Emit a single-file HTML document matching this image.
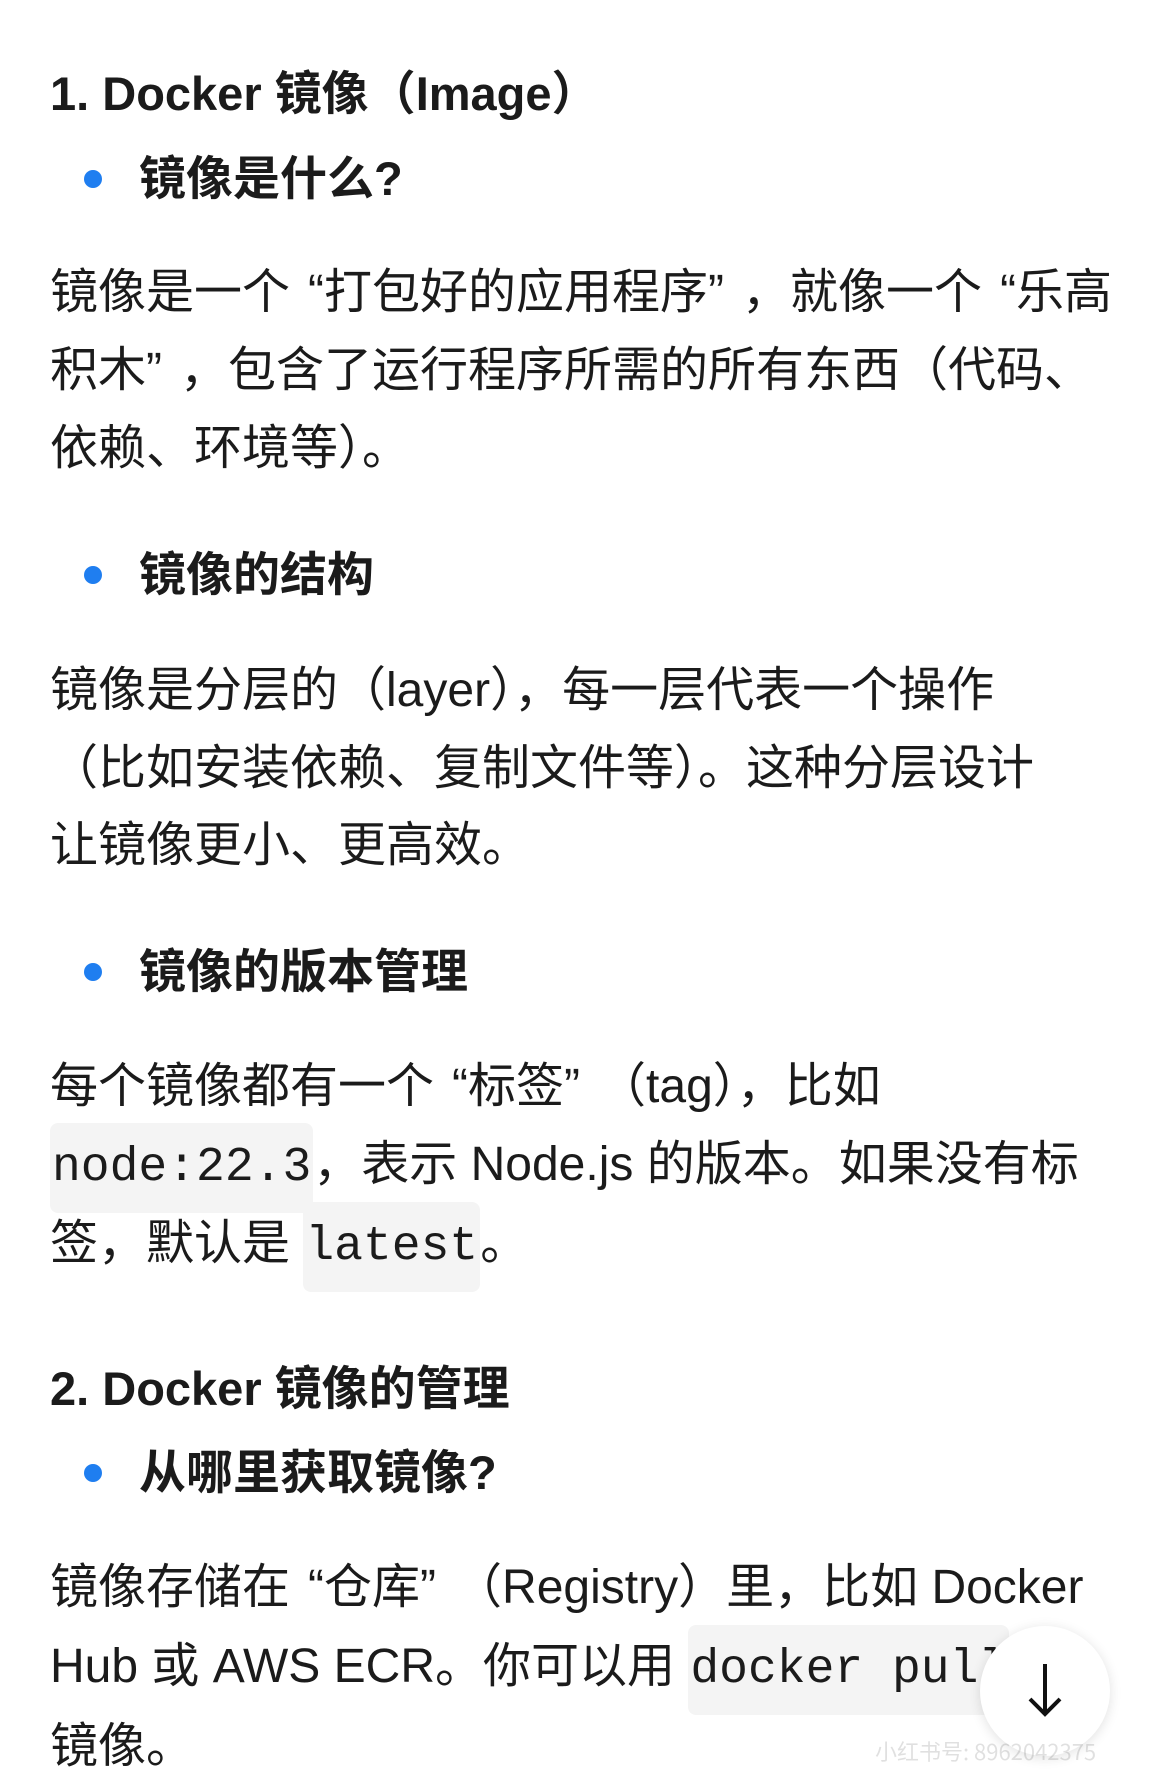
<!DOCTYPE html>
<html><head><meta charset="utf-8"><style>
html,body{margin:0;padding:0;background:#fff;}
body{width:1170px;height:1787px;position:relative;overflow:hidden;font-family:"Noto Sans CJK SC","Liberation Sans",sans-serif;color:#1b1b1b;}
.e{font-family:"Liberation Sans",sans-serif;}
.o,.c{font-family:"Liberation Sans",sans-serif;display:inline-block;width:34px;}
.o{text-align:right;}
.c{text-align:left;}
.l{position:absolute;left:50px;height:78px;line-height:78px;font-size:48px;white-space:nowrap;}
.h{font-weight:bold;font-size:47px;}
.b{left:139px;font-weight:bold;font-size:47px;}
.dot{position:absolute;left:84px;width:18px;height:18px;border-radius:50%;background:#1f7ef0;}
code{font-family:"Liberation Mono",monospace;font-size:48px;background:#f4f4f4;border-radius:8px;padding:18px 2px;}
</style></head><body>
<div class="l h" style="top:51px"><span class="e">1. Docker </span>镜像（<span class="e">Image</span>）</div>
<div class="dot" style="top:170px"></div><div class="l b" style="top:136px">镜像是什么<span class="e">?</span></div>
<div class="l" style="top:248px">镜像是一个<span class="o">“</span>打包好的应用程序<span class="c">”</span>，就像一个<span class="o">“</span>乐高</div>
<div class="l" style="top:326px">积木<span class="c">”</span>，包含了运行程序所需的所有东西（代码、</div>
<div class="l" style="top:404px">依赖、环境等）。</div>
<div class="dot" style="top:566px"></div><div class="l b" style="top:532px">镜像的结构</div>
<div class="l" style="top:646px">镜像是分层的（<span class="e">layer</span>），每一层代表一个操作</div>
<div class="l" style="top:724px">（比如安装依赖、复制文件等）。这种分层设计</div>
<div class="l" style="top:801px">让镜像更小、更高效。</div>
<div class="dot" style="top:963px"></div><div class="l b" style="top:929px">镜像的版本管理</div>
<div class="l" style="top:1042px">每个镜像都有一个<span class="o">“</span>标签<span class="c">”</span>（<span class="e">tag</span>），比如</div>
<div class="l" style="top:1120px"><code>node:22.3</code>，表示<span class="e"> Node.js </span>的版本。如果没有标</div>
<div class="l" style="top:1199px">签，默认是<span class="e"> </span><code>latest</code>。</div>
<div class="l h" style="top:1346px"><span class="e">2. Docker </span>镜像的管理</div>
<div class="dot" style="top:1464px"></div><div class="l b" style="top:1430px">从哪里获取镜像<span class="e">?</span></div>
<div class="l" style="top:1543px">镜像存储在<span class="o">“</span>仓库<span class="c">”</span>（<span class="e">Registry</span>）里，比如<span class="e"> Docker</span></div>
<div class="l" style="top:1622px"><span class="e">Hub </span>或<span class="e"> AWS ECR</span>。你可以用<span class="e"> </span><code>docker pull</code></div>
<div class="l" style="top:1702px">镜像。</div>
<div style="position:absolute;left:980px;top:1626px;width:130px;height:130px;border-radius:50%;background:#fff;box-shadow:0 2px 12px rgba(0,0,0,0.12);"></div>
<svg style="position:absolute;left:1020px;top:1660px" width="50" height="60" viewBox="0 0 50 60"><path d="M25 4V54M10 39L25 54L40 39" stroke="#111" stroke-width="4" fill="none"/></svg>
<div style="position:absolute;left:875px;top:1735px;font-size:22px;color:rgba(0,0,0,0.12);">小红书号: 8962042375</div>
</body></html>
